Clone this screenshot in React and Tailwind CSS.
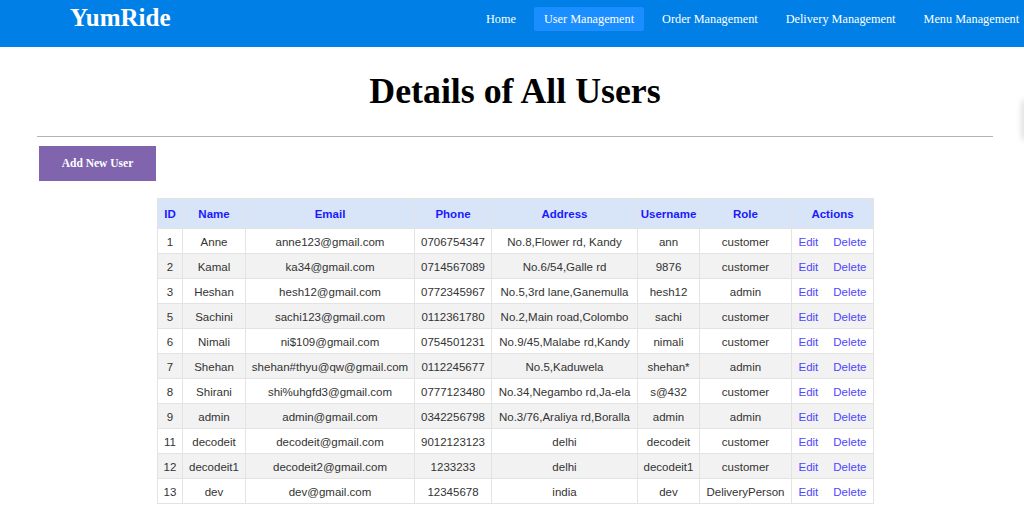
import React from 'react';

const navLinks = ['Home', 'User Management', 'Order Management', 'Delivery Management', 'Menu Management'];

const users = [
  [1, 'Anne', 'anne123@gmail.com', '0706754347', 'No.8,Flower rd, Kandy', 'ann', 'customer'],
  [2, 'Kamal', 'ka34@gmail.com', '0714567089', 'No.6/54,Galle rd', '9876', 'customer'],
  [3, 'Heshan', 'hesh12@gmail.com', '0772345967', 'No.5,3rd lane,Ganemulla', 'hesh12', 'admin'],
  [5, 'Sachini', 'sachi123@gmail.com', '0112361780', 'No.2,Main road,Colombo', 'sachi', 'customer'],
  [6, 'Nimali', 'ni$109@gmail.com', '0754501231', 'No.9/45,Malabe rd,Kandy', 'nimali', 'customer'],
  [7, 'Shehan', 'shehan#thyu@qw@gmail.com', '0112245677', 'No.5,Kaduwela', 'shehan*', 'admin'],
  [8, 'Shirani', 'shi%uhgfd3@gmail.com', '0777123480', 'No.34,Negambo rd,Ja-ela', 's@432', 'customer'],
  [9, 'admin', 'admin@gmail.com', '0342256798', 'No.3/76,Araliya rd,Boralla', 'admin', 'admin'],
  [11, 'decodeit', 'decodeit@gmail.com', '9012123123', 'delhi', 'decodeit', 'customer'],
  [12, 'decodeit1', 'decodeit2@gmail.com', '1233233', 'delhi', 'decodeit1', 'customer'],
  [13, 'dev', 'dev@gmail.com', '12345678', 'india', 'dev', 'DeliveryPerson'],
];

const headers = ['ID', 'Name', 'Email', 'Phone', 'Address', 'Username', 'Role', 'Actions'];
const widths = ['w-[25px]', 'w-[63px]', 'w-[169px]', 'w-[77px]', 'w-[146px]', 'w-[62px]', 'w-[92px]', 'w-[82px]'];

const App = () => {
  return (
    <div className="relative h-[509px] w-[1024px] overflow-hidden bg-white">
      <header className="flex h-[47px] items-start bg-[#0080e7] pl-[70px] font-['Liberation_Serif',serif] text-white">
        <div className="w-[406px] shrink-0 pt-[4px] text-[25px] leading-[28px] font-bold">YumRide</div>
        <nav className="flex shrink-0 gap-2 pt-[7px]">
          {navLinks.map((link) => (
            <a
              key={link}
              href="#"
              className={`h-[24px] rounded-[2px] px-2.5 text-[12.25px] leading-[24px] whitespace-nowrap ${
                link === 'User Management' ? 'bg-[#1a8dff]' : ''
              }`}
            >
              {link}
            </a>
          ))}
        </nav>
      </header>

      <main className="ml-[37px] w-[956px]">
        <h1 className="pt-[24px] text-center font-['Liberation_Serif',serif] text-[35.8px] leading-[41px] font-bold text-black">
          Details of All Users
        </h1>
        <hr className="mt-[24px] border-t border-[#b4b4b4]" />
        <button className="mt-[9px] ml-[2px] block h-[35px] w-[117px] bg-[#8064ae] font-['Liberation_Serif',serif] text-[11.5px] font-bold text-white">
          Add New User
        </button>

        <table className="mx-auto mt-[17px] w-[716px] table-fixed border-collapse font-['Liberation_Sans',sans-serif] text-[11.5px]">
          <colgroup>
            {widths.map((w, i) => (
              <col key={i} className={w} />
            ))}
          </colgroup>
          <thead>
            <tr className="h-[30px] bg-[#d8e5f9]">
              {headers.map((h) => (
                <th key={h} className="border border-[#e3e3e3] p-0 pt-[2px] pl-[1px] text-center font-bold text-[#1a1aff]">
                  {h}
                </th>
              ))}
            </tr>
          </thead>
          <tbody>
            {users.map((u, i) => (
              <tr key={u[0]} className={`h-[25px] text-[#333333] ${i % 2 === 1 ? 'bg-[#f2f2f2]' : 'bg-white'}`}>
                {u.map((cell, j) => (
                  <td key={j} className="border border-[#e3e3e3] p-0 pt-[3px] pl-[1px] text-center whitespace-nowrap">
                    {cell}
                  </td>
                ))}
                <td className="border border-[#e3e3e3] p-0 pt-[3px]">
                  <div className="flex justify-between pr-[6px] pl-[7px] text-[#4f46ff]">
                    <a href="#">Edit</a>
                    <a href="#">Delete</a>
                  </div>
                </td>
              </tr>
            ))}
          </tbody>
        </table>
      </main>

      <div className="absolute top-[100px] left-[1022px] h-[40px] w-[6px] rounded-full bg-[#d8d8d8] blur-[3px]" />
    </div>
  );
};

export default App;
